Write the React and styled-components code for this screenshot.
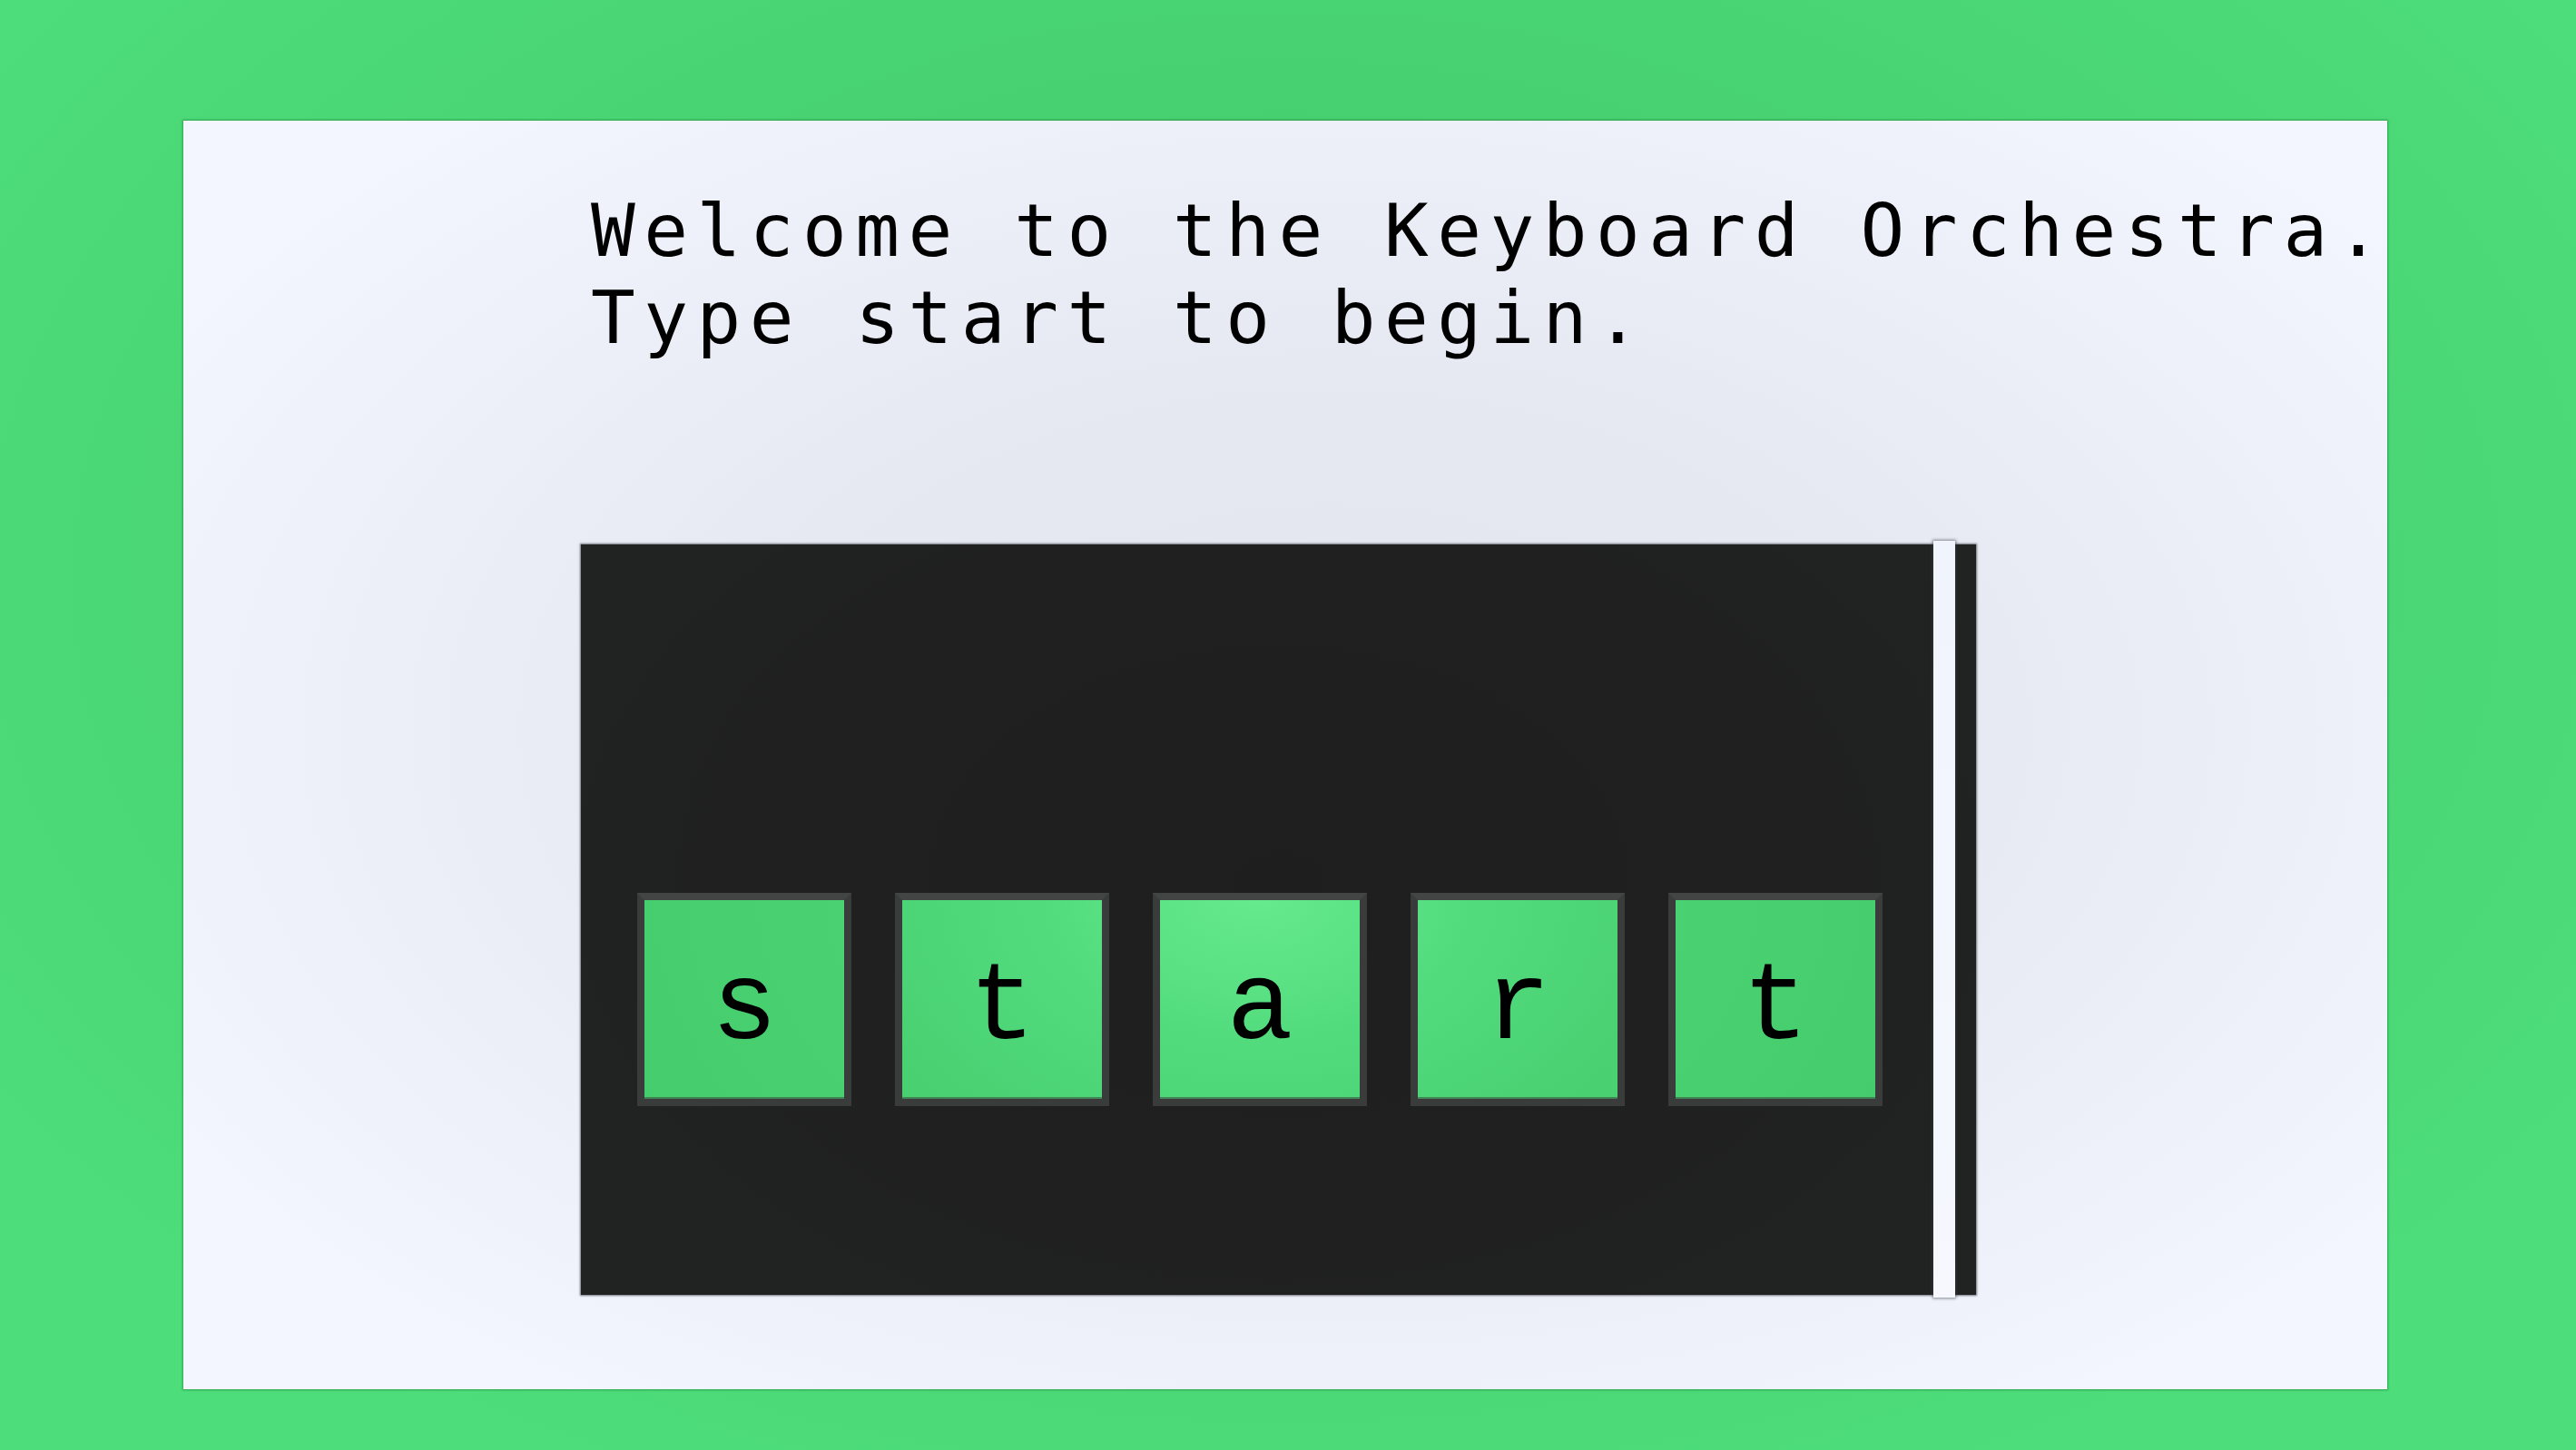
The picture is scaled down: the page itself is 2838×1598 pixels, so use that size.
import React from "react";
import styled, { createGlobalStyle } from "styled-components";

const GlobalStyle = createGlobalStyle`
  html, body {
    margin: 0;
    padding: 0;
  }
  body {
    font-family: "DejaVu Sans Mono", monospace;
  }
  * {
    box-sizing: border-box;
  }
`;

const Page = styled.div`
  min-height: 100vh;
  padding: 133px 208px 67px 202px;
  background: radial-gradient(
    ellipse 1700px 1100px at 50% 40%,
    #43c96b 0%,
    #47d070 45%,
    #4ddd7a 100%
  );
  display: flex;
`;

const Card = styled.main`
  flex: 0 0 2428px;
  width: 2428px;
  min-width: 0;
  height: 1398px;
  display: flex;
  flex-direction: column;
  padding: 73px 0 0 438px;
  background: radial-gradient(
    ellipse 1500px 900px at 52% 48%,
    #e2e5ed 0%,
    #e6e9f1 45%,
    #f3f6fe 100%
  );
  box-shadow: 0 0 2px 1px rgba(20, 90, 40, 0.45);
`;

const Message = styled.div`
  margin-left: 11px;
  font-family: "DejaVu Sans Mono", monospace;
  font-size: 81px;
  line-height: 96px;
  letter-spacing: 9.5px;
  color: #000;
  white-space: pre;
`;

const Stage = styled.section`
  position: relative;
  margin-top: 202px;
  width: 1537px;
  height: 827px;
  flex: none;
  display: flex;
  align-items: flex-end;
  padding: 0 0 208px 62px;
  background: radial-gradient(
    ellipse 900px 600px at 50% 45%,
    #1d1e1d 0%,
    #1f201f 60%,
    #212322 100%
  );
  box-shadow: 0 0 2px 1px rgba(70, 72, 80, 0.75);
`;

const KeyRow = styled.div`
  display: flex;
  gap: 48px;
`;

const Key = styled.div`
  width: 236px;
  height: 235px;
  display: flex;
  align-items: center;
  justify-content: center;
  padding-top: 21px;
  border: 8px solid #3a3b3b;
  border-top-color: #434444;
  background: radial-gradient(
      ellipse 760px 520px at 1385px 985px,
      #66eb8f 0%,
      #53dc7e 30%,
      #49d172 60%,
      #45cd6d 100%
    )
    fixed;
  box-shadow: inset 0 -2px 0 rgba(60, 70, 62, 0.55);
  font-family: "Liberation Mono", "Courier New", monospace;
  font-size: 122px;
  line-height: 1.133;
  color: #000;
`;

const CursorBar = styled.div`
  position: absolute;
  left: 1490px;
  top: -4px;
  bottom: -3px;
  width: 24px;
  background: linear-gradient(180deg, #f0f4fd, #f6f8fe);
  box-shadow: 0 0 3px 1px rgba(60, 62, 70, 0.6);
`;

const letters = ["s", "t", "a", "r", "t"];

export default function App() {
  return (
    <>
      <GlobalStyle />
      <Page>
        <Card>
          <Message>
            {"Welcome to the Keyboard Orchestra.\nType start to begin."}
          </Message>
          <Stage>
            <KeyRow>
              {letters.map((l, i) => (
                <Key key={i}>{l}</Key>
              ))}
            </KeyRow>
            <CursorBar />
          </Stage>
        </Card>
      </Page>
    </>
  );
}
